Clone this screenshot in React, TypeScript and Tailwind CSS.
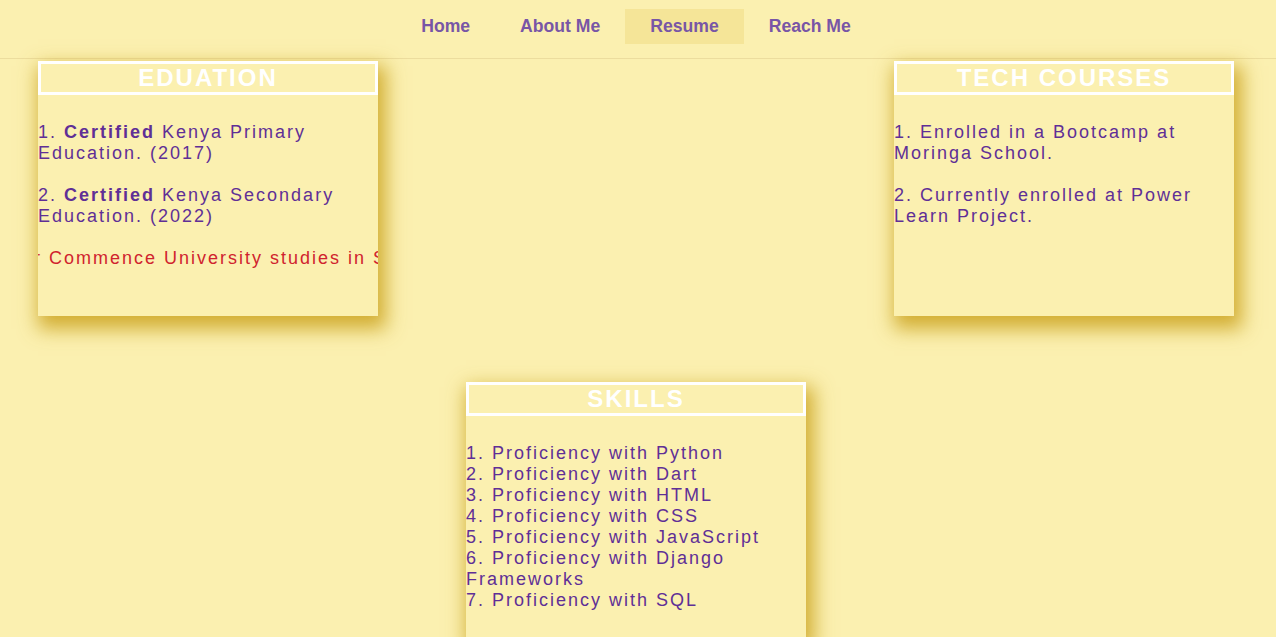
import React from 'react';

const links = ['Home', 'About Me', 'Resume', 'Reach Me'];

const skills = [
    'Python',
    'Dart',
    'HTML',
    'CSS',
    'JavaScript',
    'Django Frameworks',
    'SQL',
];

const Card: React.FC<{ title: string, children: React.ReactNode }> = ({ title, children }) => {
    return (
        <div className="w-[340px] h-[255px] bg-[#fbf0b0] shadow-[4px_9px_18px_4px_rgba(200,158,20,0.8)] overflow-hidden">
            <h2 className="h-[34px] border-[3px] border-white text-center text-white font-bold text-[24px] leading-[27px] tracking-[2px]">
                {title}
            </h2>
            <div className="mt-[27px] text-[18px] leading-[21px] tracking-[2px] text-[#5f2f96]">
                {children}
            </div>
        </div>
    );
};

const App: React.FC = () => {
    return (
        <div className="bg-[#fbf0b0] font-['Liberation_Sans',Arial,sans-serif]">
            <nav className="h-[59px] border-b border-[#ecdd9e] flex items-start justify-center pt-[9px] pr-1">
                {links.map((l) => (
                    <a
                        key={l}
                        href="#"
                        className={`h-[35px] px-[25px] flex items-center text-[17.6px] font-bold text-[#7856a6] ${l === 'Resume' ? 'bg-[#f5e598]' : ''}`}
                    >
                        {l}
                    </a>
                ))}
            </nav>

            <div className="flex justify-between pl-[38px] pr-[42px] pt-[2px]">
                <Card title="EDUATION">
                    <p>1. <b>Certified</b> Kenya Primary Education. (2017)</p>
                    <p className="mt-[21px]">2. <b>Certified</b> Kenya Secondary Education. (2022)</p>
                    <div className="mt-[21px] overflow-hidden whitespace-nowrap text-[#d0232e]">
                        <span className="inline-block ml-[-63px]">Set for Commence University studies in September 2023.</span>
                    </div>
                </Card>
                <Card title="TECH COURSES">
                    <p>1. Enrolled in a Bootcamp at Moringa School.</p>
                    <p className="mt-[21px]">2. Currently enrolled at Power Learn Project.</p>
                </Card>
            </div>

            <div className="flex justify-center pr-1 mt-[66px]">
                <Card title="SKILLS">
                    {skills.map((s, i) => (
                        <p key={s}>{i + 1}. Proficiency with {s}</p>
                    ))}
                </Card>
            </div>
        </div>
    );
};

export default App;
